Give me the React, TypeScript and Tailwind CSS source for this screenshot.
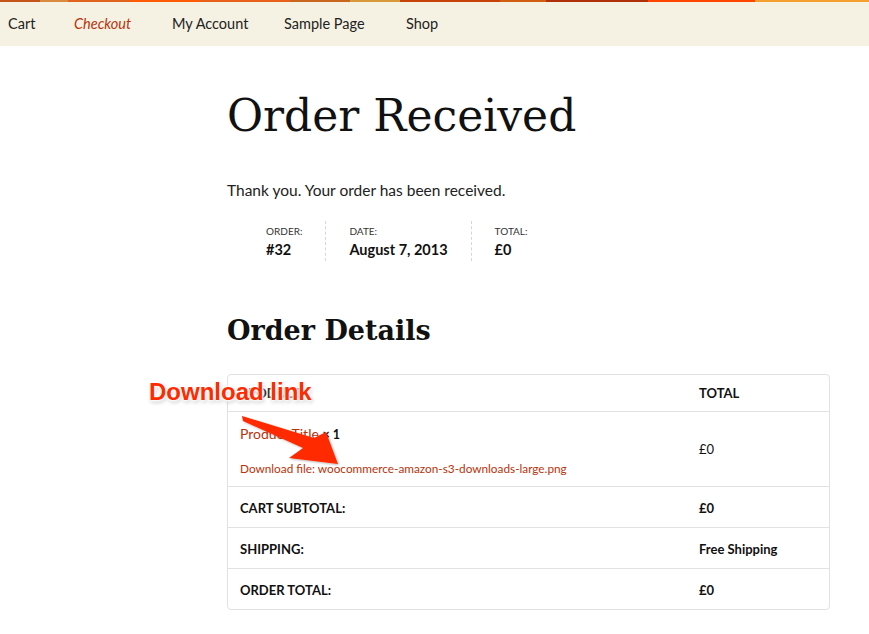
import React from 'react';

const sans = "font-['Lato','Noto_Sans',sans-serif]";
const serif = "font-['DejaVu_Serif','Liberation_Serif',serif]";

const NavBar: React.FC = () => {
  const items = [
    { name: 'Cart', w: 'w-[66px]' },
    { name: 'Checkout', w: 'w-[98px]' },
    { name: 'My Account', w: 'w-[112px]' },
    { name: 'Sample Page', w: 'w-[122px]' },
    { name: 'Shop', w: 'w-[50px]' },
  ];
  return (
    <div className="w-full bg-[#f5f2e4]">
      <div className="flex h-[2px] w-full">
        <div className="w-[40px] bg-[#c5541a]" />
        <div className="w-[28px] bg-[#d88a3e]" />
        <div className="w-[62px] bg-[#e0621c]" />
        <div className="w-[70px] bg-[#ff5a06]" />
        <div className="w-[90px] bg-[#e86018]" />
        <div className="w-[60px] bg-[#c9661f]" />
        <div className="w-[50px] bg-[#d99a3a]" />
        <div className="w-[100px] bg-[#c8420c]" />
        <div className="w-[46px] bg-[#d06010]" />
        <div className="w-[102px] bg-[#b0300a]" />
        <div className="w-[107px] bg-[#ff4500]" />
        <div className="flex-1 bg-[#f4a030]" />
      </div>
      <nav className={`flex h-[44px] items-center pl-[8px] text-[14.5px] text-[#222] ${sans}`}>
        {items.map((it, i) => (
          <span key={it.name} className={`${it.w} ${i === 1 ? 'italic text-[#b8340c]' : ''}`}>
            {it.name}
          </span>
        ))}
      </nav>
    </div>
  );
};

const Overview: React.FC = () => {
  const cells = [
    { label: 'ORDER:', value: '#32' },
    { label: 'DATE:', value: 'August 7, 2013' },
    { label: 'TOTAL:', value: '£0' },
  ];
  return (
    <ul className={`ml-[39px] mt-[21px] flex ${sans}`}>
      {cells.map((c, i) => (
        <li
          key={c.label}
          className={
            i < cells.length - 1
              ? 'border-r border-dashed border-[#d6d6d6] pr-[23px] mr-[23px] py-[3px]'
              : 'py-[3px]'
          }
        >
          <div className="text-[10px] leading-[14px] text-[#333]">{c.label}</div>
          <div className="mt-[4px] text-[14.5px] font-bold leading-[16px] text-[#111]">{c.value}</div>
        </li>
      ))}
    </ul>
  );
};

const DetailsTable: React.FC = () => {
  const row = 'flex border-t border-[#e2e2e2] text-[13px] font-bold text-[#111]';
  return (
    <div className={`mt-[25px] w-[603px] rounded-[4px] border border-[#e2e2e2] ${sans}`}>
      <div className="flex h-[36px] items-center pt-[2px] text-[13px] font-bold uppercase text-[#111]">
        <div className="w-[471px] pl-[12px]">Product</div>
        <div>Total</div>
      </div>
      <div className="flex h-[75px] items-center border-t border-[#e2e2e2] pt-[2px] text-[13px]">
        <div className="w-[471px] pl-[12px]">
          <div className="text-[14px] text-[#b8340c]">
            Product Title <span className="text-[12.5px] font-bold text-[#111]">× 1</span>
          </div>
          <div className="mt-[15px] text-[11.8px] text-[#b8340c]">
            Download file: woocommerce-amazon-s3-downloads-large.png
          </div>
        </div>
        <div className="text-[#111]">£0</div>
      </div>
      <div className={`${row} h-[41px] items-center pt-[3px]`}>
        <div className="w-[471px] pl-[12px] uppercase">Cart Subtotal:</div>
        <div>£0</div>
      </div>
      <div className={`${row} h-[41px] items-center pt-[3px]`}>
        <div className="w-[471px] pl-[12px] uppercase">Shipping:</div>
        <div>Free Shipping</div>
      </div>
      <div className={`${row} h-[41px] items-center pt-[3px]`}>
        <div className="w-[471px] pl-[12px] uppercase">Order Total:</div>
        <div>£0</div>
      </div>
    </div>
  );
};

const Annotation: React.FC = () => (
  <>
    <div className="absolute left-[149px] top-[378px] font-['Liberation_Sans',Arial,sans-serif] text-[24px] font-bold leading-[28px] text-[#ff2a00] [text-shadow:0_0_2px_#fff,0_0_2px_#fff,0_0_3px_#fff,0_0_4px_#fff,0_0_4px_#fff,1px_2px_4px_rgba(0,0,0,0.3)]">
      Download link
    </div>
    <svg className="absolute left-0 top-0" width="869" height="634" viewBox="0 0 869 634">
      <defs>
        <filter id="sh" x="-20%" y="-20%" width="140%" height="140%">
          <feDropShadow dx="1" dy="1" stdDeviation="1.2" floodColor="#000" floodOpacity="0.3" />
        </filter>
      </defs>
      <polygon
        points="242,416 314,438 326,432 338,464 289,458 303,448 243,421"
        fill="#ff2a00"
        filter="url(#sh)"
      />
    </svg>
  </>
);

const App: React.FC = () => {
  return (
    <div className="relative min-h-[634px] w-[869px] overflow-hidden bg-white">
      <NavBar />
      <div className="pl-[227px]">
        <h1 className={`mt-[41px] text-[44px] leading-[58px] text-[#111] ${serif}`}>Order Received</h1>
        <p className={`mt-[35px] text-[15.5px] leading-[20px] text-[#222] ${sans}`}>
          Thank you. Your order has been received.
        </p>
        <Overview />
        <h2 className={`mt-[52px] text-[27px] font-bold leading-[36px] text-[#111] ${serif}`}>Order Details</h2>
        <DetailsTable />
      </div>
      <Annotation />
    </div>
  );
};

export default App;
